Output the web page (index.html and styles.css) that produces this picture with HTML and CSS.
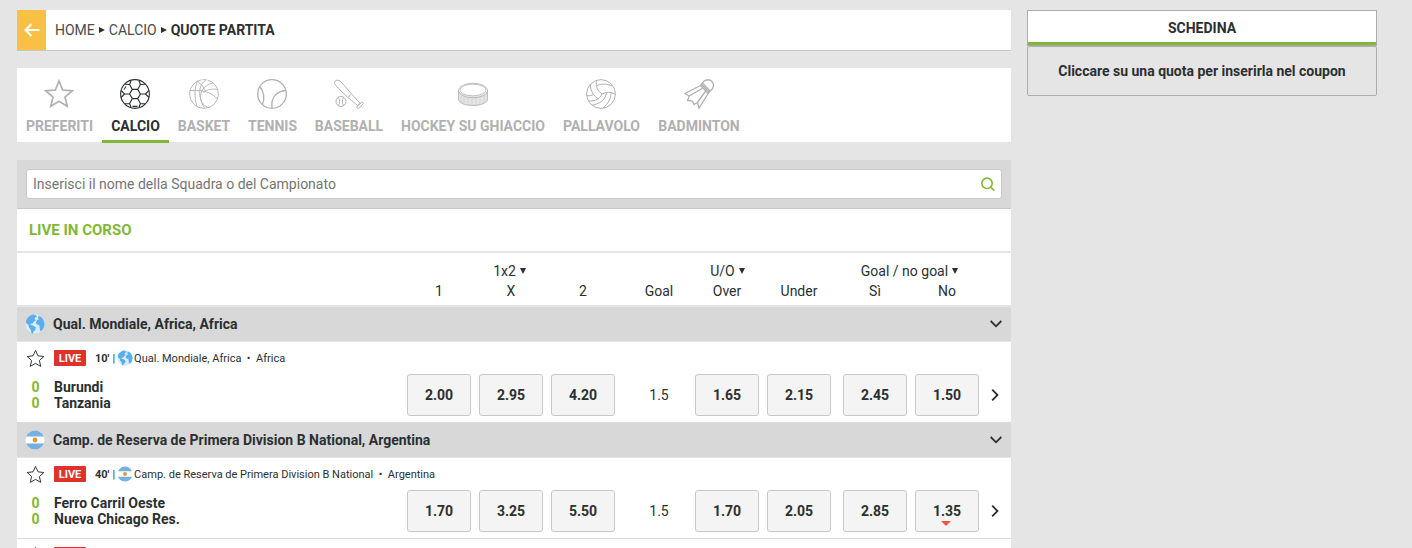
FILE: index.html
```html
<!DOCTYPE html>
<html lang="it">
<head>
<meta charset="utf-8">
<title>Quote partita</title>
<link rel="stylesheet" href="styles.css">
</head>
<body>
<svg class="defs" width="0" height="0">
  <symbol id="star" viewBox="0 0 20 20"><path d="M10 1.500l2.600 5.700 6.200.7-4.700 4.200 1.400 6.200-5.500-3.200-5.500 3.200 1.400-6.200L1.200 7.900l6.200-.7z" fill="none" stroke="currentColor" stroke-linejoin="round"/></symbol>
  <symbol id="globe" viewBox="0 0 20 20"><circle cx="10" cy="10" r="9.500" fill="#d9edf9"/><path d="M.8 7.500C1.800 4 4.800 1.200 8.500.6l2.500.8 1 1.600-2 .4-.5 1.600 1.600 1.200-2.100 1.200-1.500 2.200-2 .2.300 1.200 2 .4 3 1.900-.6 2.600-1.900 1.900-.5 2-1.300-.7-.9-3.700-1.900-2.300-.2-2.200-2-1.300zM13.600 2l3 1.300 2 3 .9 3.400-.7 4-2.500 3.400-1.300-.4-.4-3.200-.5-2.400-2.400-.6-.9-2.200 1.500-2.200 2-.8-1.500-1z" fill="#5badee"/></symbol>
  <symbol id="argentina" viewBox="0 0 20 20"><clipPath id="disc"><circle cx="10" cy="10" r="9.500"/></clipPath><g clip-path="url(#disc)"><path fill="#fff" d="M0 0h20v20H0z"/><path fill="#75b0e2" d="M0 0h20v6.600H0zM0 13.400h20V20H0z"/><circle cx="10" cy="10" r="2.400" fill="#e0953a"/></g></symbol>
  <symbol id="down" viewBox="0 0 12 8"><path d="M.7 1l5.300 5.300L11.300 1" fill="none" stroke="currentColor" stroke-width="1.800"/></symbol>
  <symbol id="right" viewBox="0 0 8 12"><path d="M1.200.7L6.500 6l-5.300 5.300" fill="none" stroke="currentColor" stroke-width="1.800"/></symbol>
</svg>
<div class="page">
  <main class="main">
    <nav class="crumbs">
      <a class="back"><svg width="16" height="14" viewBox="0 0 16 14"><path d="M15.500 7H1.500M7.500 1l-6 6 6 6" fill="none" stroke="#fff" stroke-width="2"/></svg></a>
      <span class="crumb">HOME</span><i class="sep"></i><span class="crumb">CALCIO</span><i class="sep"></i><b class="here">QUOTE PARTITA</b>
    </nav>
    <div class="sports">
      <a class="sport"><svg viewBox="0 0 30 30"><path d="M15 2l3.700 9 9.600.8-7.300 6.200 2.200 9.300-8.200-5-8.200 5L9 18l-7.300-6.200 9.600-.8z" fill="none" stroke="currentColor" stroke-width="1.700"/></svg><span>PREFERITI</span></a>
      <a class="sport active"><svg viewBox="0 0 30 30"><g fill="none" stroke="currentColor" stroke-width="1.100"><circle cx="15" cy="15" r="14.400"/><path d="M12.300 10.400h5.400l2.700 4.600-2.700 4.600h-5.400L9.600 15zM12.300 10.400L9.600 5.500l1.500-4M9.600 5.500L5 5.300M17.700 10.400l2.700-4.900-1.500-4M20.400 5.500l4.600-.2M12.300 19.600l-2.700 4.900 1.500 4M9.600 24.500l-4.600.2M17.700 19.600l2.700 4.900-1.500 4M20.400 24.500l4.600.2M9.600 15H4.500L1.100 11.500M4.500 15l-3.400 3.500M20.400 15h5.100l3.400-3.500M25.500 15l3.400 3.500"/><path d="M4 10.500l2-3M12.500 27.400h5"/></g></svg><span>CALCIO</span></a>
      <a class="sport"><svg viewBox="0 0 30 30"><g fill="none" stroke="currentColor" stroke-width=".9"><circle cx="15" cy="15" r="14.400" stroke-dasharray="65 1 4 1"/><path d="M.6 11.500h7c9 0 15 2.500 20.800 8.500M8.500 2.200C5.500 9 5 18 8 27.500M17 .8C9 6 8.500 18 15.500 29M8.500 2.200C12 5 14.500 8 16.500 12M24 4c-9 2-13 9-12.500 14.500S15.500 27 19.500 28.500M28.500 10.500c-6-1-11 0-14 3.500"/></g></svg><span>BASKET</span></a>
      <a class="sport"><svg viewBox="0 0 30 30"><g fill="none" stroke="currentColor" stroke-width="1.300"><circle cx="15" cy="15" r="14.300"/><path d="M2.500 7.500C7 12 8 20 5.500 25.500M28.800 11.500C20.500 12 13.500 17.500 15 29"/></g></svg><span>TENNIS</span></a>
      <a class="sport"><svg viewBox="0 0 30 30"><g fill="none" stroke="currentColor" stroke-width="1"><path d="M.8 4.800C-.3 1.800 3 .2 6 2c5 5 14 16 20 22.200l-2.300 2.300C16 20.500 4 10 .8 4.800zM14.500 18l2-2.500M24 29.300c-1.500-.3-1.500-1.500-.5-2.500l4-3.300c1-.7 2 .1 1.500 1.300l-2.700 3.400c-.7.900-1.500 1.300-2.300 1.100z"/><circle cx="7" cy="22.500" r="5"/><path d="M4.500 18.500c1.500 2.500 1.500 5.500 0 8M9.500 18.500c-1.500 2.500-1.500 5.500 0 8"/></g></svg><span>BASEBALL</span></a>
      <a class="sport"><svg viewBox="0 0 30 30"><path d="M0 11v9.500c2 9 28 9 30 0V11c-3 8-27 8-30 0z" fill="#e4e4e4"/><g fill="none" stroke="currentColor" stroke-width=".8"><ellipse cx="15" cy="11.500" rx="14.600" ry="7.300"/><ellipse cx="15" cy="11" rx="13" ry="5.800"/><path d="M.4 11v9c1 8.500 28.200 8.500 29.200 0v-9"/><path d="M3 17v7M6 18v7M10 19v7M14 19v8M18 19v7M22 18v7M26 17v6" stroke="#cfcfcf"/></g></svg><span>HOCKEY SU GHIACCIO</span></a>
      <a class="sport"><svg viewBox="0 0 30 30"><g fill="none" stroke="currentColor" stroke-width="1"><circle cx="15" cy="15" r="14.400"/><path d="M10.500 1.500c-.8 6 .7 10 5.500 13.500M11 6.500c5-2.200 10-1.700 15 .500M16 15c3-1.700 6-2 9-1.500l4 1.500M25 13.500c.3 6-3.200 11.500-8 15.500M20.500 13.800C19.500 20 15 24.500 6 26.300M16 15c-1.500 4.500-7 7.500-13.800 7M12.500 20C8 17 4 12 4.500 5.300M7.500 15.500C4.500 17 2.500 17 .8 16.500"/></g></svg><span>PALLAVOLO</span></a>
      <a class="sport"><svg viewBox="0 0 30 30"><g fill="none" stroke="currentColor" stroke-width="1.300"><path d="M18.500 4c2-4 7.500-4.200 9.800-1.200s1 7.200-2.300 9.200zM18.500 4l-2 2.500 7.700 8 1.800-2.500M17.500 5.200l7.700 8M16.500 6.500L.8 14.500l4.500 2.500L3.500 21.500l5 .5 1.500 3.500 3.500-2 1.500 5.700 9.200-14.700M19 9L5.300 17M21.700 12l-8.200 11.500"/></g></svg><span>BADMINTON</span></a>
    </div>
    <div class="searchbar"><div class="search"><span>Inserisci il nome della Squadra o del Campionato</span><svg width="15" height="15" viewBox="0 0 15 15"><g fill="none" stroke="#82b735" stroke-width="1.600"><circle cx="7" cy="6.300" r="5.200"/><path d="M10.700 10l3.800 3.800"/></g></svg></div></div>
    <h2 class="live-title">LIVE IN CORSO</h2>
    <div class="head">
      <div class="g1">1x2<i class="caret"></i></div><div class="g2">U/O<i class="caret"></i></div><div class="g3">Goal / no goal<i class="caret"></i></div>
      <span class="c1">1</span><span>X</span><span>2</span><span class="goal">Goal</span><span>Over</span><span>Under</span><span class="c7">Sì</span><span>No</span>
    </div>
    <section>
      <div class="league"><svg class="flag"><use href="#globe"/></svg><b>Qual. Mondiale, Africa, Africa</b><svg class="fold"><use href="#down"/></svg></div>
      <div class="match">
        <div class="info"><svg class="fav"><use href="#star"/></svg><span class="live">LIVE</span><b class="minute">10'</b><i class="bar">|</i><svg class="mini"><use href="#globe"/></svg><span class="where">Qual. Mondiale, Africa &nbsp;<i class="dot">•</i>&nbsp; Africa</span></div>
        <div class="row">
          <div class="teams"><b class="score">0</b><b>Burundi</b><b class="score">0</b><b>Tanzania</b></div>
          <a class="odd">2.00</a><a class="odd">2.95</a><a class="odd">4.20</a><span class="goal">1.5</span><a class="odd">1.65</a><a class="odd">2.15</a><a class="odd c7">2.45</a><a class="odd">1.50</a><svg class="more"><use href="#right"/></svg>
        </div>
      </div>
    </section>
    <section>
      <div class="league"><svg class="flag"><use href="#argentina"/></svg><b>Camp. de Reserva de Primera Division B National, Argentina</b><svg class="fold"><use href="#down"/></svg></div>
      <div class="match">
        <div class="info"><svg class="fav"><use href="#star"/></svg><span class="live">LIVE</span><b class="minute">40'</b><i class="bar">|</i><svg class="mini"><use href="#argentina"/></svg><span class="where">Camp. de Reserva de Primera Division B National &nbsp;<i class="dot">•</i>&nbsp; Argentina</span></div>
        <div class="row">
          <div class="teams"><b class="score">0</b><b>Ferro Carril Oeste</b><b class="score">0</b><b>Nueva Chicago Res.</b></div>
          <a class="odd">1.70</a><a class="odd">3.25</a><a class="odd">5.50</a><span class="goal">1.5</span><a class="odd">1.70</a><a class="odd">2.05</a><a class="odd c7">2.85</a><a class="odd falling">1.35</a><svg class="more"><use href="#right"/></svg>
        </div>
      </div>
      <div class="match">
        <div class="info"><svg class="fav"><use href="#star"/></svg><span class="live"></span></div>
      </div>
    </section>
  </main>
  <aside class="slip">
    <div class="slip-tab">SCHEDINA</div>
    <div class="slip-body">Cliccare su una quota per inserirla nel coupon</div>
  </aside>
</div>
</body>
</html>
```
FILE: styles.css
```css
* { box-sizing: border-box; }
html, body { height: 100%; overflow: hidden; }
body { margin: 0; background: #e5e5e5; color: #2b2f30; font: 14px/16px Roboto, "Liberation Sans", sans-serif; }
i { font-style: normal; }
.defs { position: absolute; }
.page { display: flex; align-items: flex-start; gap: 16px; height: 548px; padding: 10px 0 0 17px; overflow: hidden; }
.main { width: 994px; }

.crumbs { display: flex; align-items: center; height: 41px; background: #fff; border-bottom: 1px solid #c8c8c8; }
.back { display: flex; align-items: center; justify-content: center; width: 29px; height: 40px; margin-right: 9px; background: #f8c146; }
.crumb { color: #4b4b4b; }
.sep { margin: 0 4px; border: solid transparent; border-width: 3px 0 3px 6px; border-left-color: #2b2f30; }

.sports { display: grid; grid-template-columns: 85px 67px 70px 67px 86px 162px 95px 100px; height: 74px; margin: 17px 0 18px; background: #fff; }
.sport { display: flex; flex-direction: column; align-items: center; height: 75px; padding-top: 11px; color: #b0b0b0; font-weight: 700; white-space: nowrap; }
.sport svg { width: 30px; height: 30px; margin: 0 1px 9px 0; }
.sport.active { color: #2b2f30; border-bottom: 3px solid #82b735; }

.searchbar { height: 49px; padding: 9px; background: #d8d8d8; border-bottom: 1px solid #c8c8c8; }
.search { display: flex; align-items: center; justify-content: space-between; height: 30px; padding: 0 6px; background: #fff; border: 1px solid #c8c8c8; border-radius: 3px; color: #757575; }
.live-title { height: 44px; margin: 0; padding: 0 12px; background: #fff; border-bottom: 2px solid #e5e5e5; color: #82b735; font-size: 15px; line-height: 42px; }

.head, .row { display: grid; grid-template-columns: 386px 72px 72px 72px 72px 72px 72px 76px 72px 24px; }
.head { grid-template-rows: 20px 20px; height: 54px; padding-top: 8px; background: #fff; border-bottom: 2px solid #e5e5e5; line-height: 20px; text-align: center; }
.g1 { grid-column: 2 / 5; padding-right: 3px; }
.g2 { grid-column: 5 / 8; padding-left: 1px; }
.g3 { grid-column: 8 / 10; padding-left: 1px; }
.c1 { grid-column: 2; }
.goal { padding-left: 8px; text-align: center; }
.head .c7 { padding-left: 4px; }
.caret { display: inline-block; margin-left: 4px; vertical-align: 2px; border: solid transparent; border-width: 6px 3.5px 0; border-top-color: #2b2f30; }

.league { display: flex; align-items: center; height: 35px; padding: 0 9px 0 8px; background: #d8d8d8; border-bottom: 1px solid #e5e5e5; }
.flag { width: 20px; height: 20px; margin: 0 8px 0 0; }
.fold { width: 12px; height: 8px; margin-left: auto; }
.match { height: 81px; background: #fff; border-bottom: 1px solid #dcdcdc; }
.info { display: flex; align-items: center; height: 32px; padding-left: 9px; font-size: 11px; line-height: 17px; }
.fav { width: 19px; height: 19px; margin-right: 9px; }
.live { width: 32px; height: 16px; margin-right: 10px; background: #e0322d; border-radius: 1px; color: #fff; font-weight: 700; text-align: center; }
.minute, .bar, .where { padding-top: 1px; }
.minute { margin-left: -1px; }
.bar { margin: 0 2px 0 3px; }
.mini { width: 16px; height: 16px; margin-right: 1px; }
.row { align-items: center; height: 42px; }
.teams { display: grid; grid-template-columns: 19px 1fr; column-gap: 9px; padding-left: 9px; }
.score { color: #82b735; text-align: center; }
.odd { height: 42px; margin: 0 4px; background: #f4f4f4; border: 1px solid #c8c8c8; border-radius: 3px; font-weight: 700; line-height: 41px; text-align: center; }
.odd.c7 { margin-left: 8px; }
.falling { position: relative; }
.falling::after { content: ""; position: absolute; left: 25px; bottom: 5px; border: solid transparent; border-width: 5px 5px 0; border-top-color: #ef5350; }
.more { width: 8px; height: 12px; margin-left: 8px; }

.slip { width: 350px; font-weight: 700; text-align: center; }
.slip-tab { height: 36px; background: #fff; border: 1px solid #acacac; border-bottom: 1px solid #acacac; box-shadow: inset 0 -3px #82b735; line-height: 34px; }
.slip-body { height: 50px; border: 1px solid #acacac; border-radius: 2px; line-height: 49px; }
```
